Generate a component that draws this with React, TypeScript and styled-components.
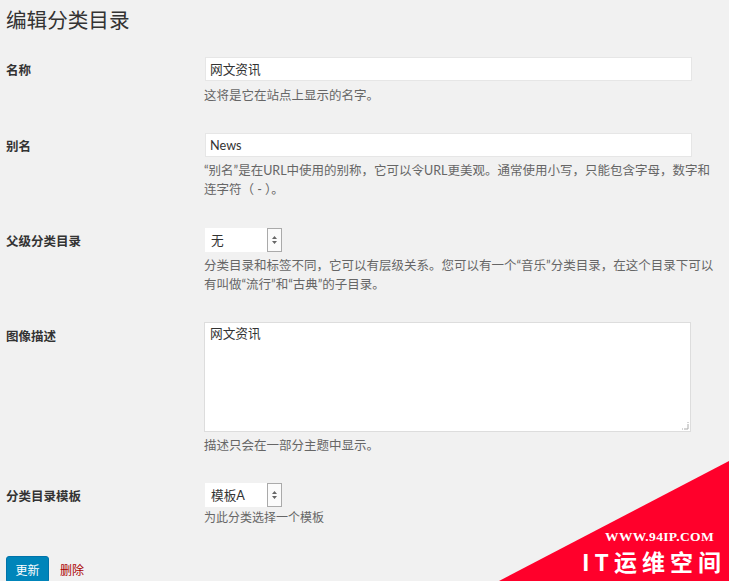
import React from "react";
import styled, { createGlobalStyle } from "styled-components";

const GlobalStyle = createGlobalStyle`
  html, body {
    margin: 0;
    padding: 0;
    background: #f1f1f1;
  }
  body {
    font-family: Lato, "Noto Sans CJK SC", sans-serif;
    color: #444;
    overflow: hidden;
  }
`;

const Page = styled.div`
  position: relative;
  width: 729px;
  height: 581px;
  overflow: hidden;
  padding-left: 6px;
  box-sizing: border-box;
`;

const Title = styled.h1`
  margin: 0;
  padding-top: 7px;
  height: 57px;
  box-sizing: border-box;
  font-size: 20.6px;
  line-height: 27px;
  font-weight: 400;
  color: #333;
`;

const Row = styled.div<{ $bottom: number }>`
  display: grid;
  grid-template-columns: 198px 1fr;
  margin-bottom: ${(p) => p.$bottom}px;
`;

const Label = styled.label<{ $top?: number }>`
  font-size: 12.5px;
  font-weight: 700;
  line-height: 24px;
  color: #333;
  padding-top: ${(p) => p.$top ?? 2}px;
`;

const Field = styled.div`
  display: flex;
  flex-direction: column;
  align-items: flex-start;
`;

const TextInput = styled.div`
  width: 487px;
  height: 24px;
  margin-left: 1px;
  box-sizing: border-box;
  padding: 0 4px;
  background: #fff;
  border: 1px solid #e6e6e6;
  font-size: 12.7px;
  line-height: 22px;
  color: #333;
`;

const SelectBox = styled.div<{ $width: number }>`
  display: flex;
  width: ${(p) => p.$width}px;
  height: 24px;
  margin-left: 1px;
  box-sizing: border-box;
  background: #fff;
  font-size: 12.7px;
  line-height: 24px;
  color: #333;
`;

const SelectValue = styled.span`
  flex: 1;
  padding-left: 6px;
`;

const SelectArrows = styled.span`
  width: 15px;
  box-sizing: border-box;
  display: flex;
  align-items: center;
  justify-content: center;
  background: #fbfbfb;
  border: 1px solid #aaa;
`;

const TextArea = styled.div`
  position: relative;
  width: 487px;
  height: 110px;
  box-sizing: border-box;
  padding: 1px 5px;
  background: #fff;
  border: 1px solid #ddd;
  font-size: 12.7px;
  line-height: 19px;
  color: #333;
`;

const Grip = styled.svg`
  position: absolute;
  right: 1px;
  bottom: 1px;
`;

const Hint = styled.p<{ $top?: number; $size?: number }>`
  margin: ${(p) => p.$top ?? 4}px 0 0;
  width: 516px;
  font-size: ${(p) => p.$size ?? 12.5}px;
  line-height: 19px;
  color: #666;
`;

const Actions = styled.div`
  display: flex;
  align-items: center;
  gap: 11px;
`;

const UpdateButton = styled.button`
  width: 43px;
  height: 27px;
  padding: 0;
  border: 1px solid #0073aa;
  border-radius: 3px;
  background: #0085ba;
  color: #fff;
  font-family: inherit;
  font-size: 12px;
`;

const DeleteLink = styled.a`
  font-size: 12px;
  color: #a00;
`;

const Corner = styled.div`
  position: absolute;
  right: 0;
  bottom: 0;
  width: 230px;
  height: 120px;
  background: #ff002b;
  clip-path: polygon(100% 0, 100% 100%, 0 100%);
`;

const CornerUrl = styled.div`
  position: absolute;
  right: 15px;
  bottom: 37px;
  font-family: "Liberation Serif", serif;
  font-size: 13.5px;
  font-weight: 700;
  letter-spacing: 0.35px;
  line-height: 14px;
  color: #fff;
`;

const CornerName = styled.div`
  position: absolute;
  right: 3px;
  bottom: 5px;
  font-family: "Noto Sans CJK SC", sans-serif;
  font-size: 23px;
  font-weight: 700;
  letter-spacing: 5px;
  line-height: 30px;
  color: #fff;
  white-space: nowrap;
`;

const Arrows = () => (
  <svg width="7" height="10" viewBox="0 0 7 10">
    <path d="M3.5 1 L6 4 H1 Z M3.5 9 L1 6 H6 Z" fill="#666" />
  </svg>
);

// full-width punctuation, written as escapes
const slugHint =
  "\u201C别名\u201D是在URL中使用的别称\uFF0C它可以令URL更美观。通常使用小写\uFF0C只能包含字母\uFF0C数字和连字符\uFF08 - \uFF09。";
const parentHint =
  "分类目录和标签不同\uFF0C它可以有层级关系。您可以有一个\u201C音乐\u201D分类目录\uFF0C在这个目录下可以有叫做\u201C流行\u201D和\u201C古典\u201D的子目录。";

export default function App() {
  return (
    <>
      <GlobalStyle />
      <Page>
        <Title>编辑分类目录</Title>
        <Row $bottom={28}>
          <Label>名称</Label>
          <Field>
            <TextInput>网文资讯</TextInput>
            <Hint $top={5}>这将是它在站点上显示的名字。</Hint>
          </Field>
        </Row>
        <Row $bottom={29}>
          <Label>别名</Label>
          <Field>
            <TextInput>News</TextInput>
            <Hint>{slugHint}</Hint>
          </Field>
        </Row>
        <Row $bottom={28}>
          <Label>父级分类目录</Label>
          <Field>
            <SelectBox $width={77}>
              <SelectValue>无</SelectValue>
              <SelectArrows>
                <Arrows />
              </SelectArrows>
            </SelectBox>
            <Hint>{parentHint}</Hint>
          </Field>
        </Row>
        <Row $bottom={28}>
          <Label $top={3}>图像描述</Label>
          <Field>
            <TextArea>
              网文资讯
              <Grip width="9" height="9" viewBox="0 0 9 9">
                <path d="M8 1v7H1M8 4v4H4" stroke="#aaa" strokeDasharray="1 1" fill="none" />
              </Grip>
            </TextArea>
            <Hint>描述只会在一部分主题中显示。</Hint>
          </Field>
        </Row>
        <Row $bottom={29}>
          <Label>分类目录模板</Label>
          <Field>
            <SelectBox $width={77}>
              <SelectValue>模板A</SelectValue>
              <SelectArrows>
                <Arrows />
              </SelectArrows>
            </SelectBox>
            <Hint $top={1} $size={12}>为此分类选择一个模板</Hint>
          </Field>
        </Row>
        <Actions>
          <UpdateButton>更新</UpdateButton>
          <DeleteLink>删除</DeleteLink>
        </Actions>
        <Corner />
        <CornerUrl>WWW.94IP.COM</CornerUrl>
        <CornerName>IT运维空间</CornerName>
      </Page>
    </>
  );
}
